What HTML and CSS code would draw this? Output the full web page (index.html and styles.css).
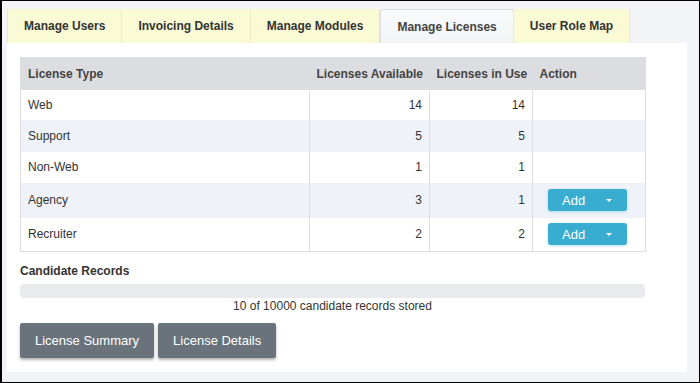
FILE: index.html
```html
<!DOCTYPE html>
<html>
<head>
<meta charset="utf-8">
<link rel="stylesheet" href="styles.css">
</head>
<body>
<div class="frame">
  <div class="tabs">
    <div class="tab">Manage Users</div>
    <div class="tab">Invoicing Details</div>
    <div class="tab">Manage Modules</div>
    <div class="tab active">Manage Licenses</div>
    <div class="tab">User Role Map</div>
  </div>
  <div class="panel">
    <table class="lic">
      <colgroup>
        <col class="c1"><col class="c2"><col class="c3"><col class="c4">
      </colgroup>
      <thead>
        <tr><th>License Type</th><th>Licenses Available</th><th>Licenses in Use</th><th>Action</th></tr>
      </thead>
      <tbody>
        <tr class="r1"><td>Web</td><td class="num">14</td><td class="num">14</td><td></td></tr>
        <tr class="r2 alt"><td>Support</td><td class="num">5</td><td class="num">5</td><td></td></tr>
        <tr class="r3"><td>Non-Web</td><td class="num">1</td><td class="num">1</td><td></td></tr>
        <tr class="r4 alt"><td>Agency</td><td class="num">3</td><td class="num">1</td><td class="act"><span class="add">Add<span class="caret"></span></span></td></tr>
        <tr class="r5"><td>Recruiter</td><td class="num">2</td><td class="num">2</td><td class="act"><span class="add">Add<span class="caret"></span></span></td></tr>
      </tbody>
    </table>
    <div class="rec-label">Candidate Records</div>
    <div class="bar"></div>
    <div class="bar-text">10 of 10000 candidate records stored</div>
    <div class="btns">
      <button class="gbtn">License Summary</button>
      <button class="gbtn">License Details</button>
    </div>
  </div>
</div>
</body>
</html>
```
FILE: styles.css
```css
html, body {
  margin: 0;
  padding: 0;
}
body {
  font-family: "Liberation Sans", Arial, sans-serif;
  color: #333;
  font-size: 12px;
}
.frame {
  width: 700px;
  height: 383px;
  box-sizing: border-box;
  border: 1px solid #000;
  border-left-width: 2px;
  background: #f3f4f8;
  padding: 8px 0 0 5px;
}
.tabs {
  display: flex;
  height: 34px;
}
.tab {
  box-sizing: border-box;
  height: 34px;
  padding: 0 16px;
  display: flex;
  align-items: center;
  background: #fafad4;
  border-left: 1px solid #ecebbe;
  border-right: 1px solid #ecebbe;
  font-weight: bold;
  font-size: 12px;
  color: #333;
  margin-right: -1px;
  white-space: nowrap;
}
.tab.active {
  background: linear-gradient(#fafbfc, #f3f4f6);
  border: 1px solid #dcdde0;
  border-bottom: none;
  border-radius: 3px 3px 0 0;
  margin-left: 1px;
  color: #444;
}
.panel {
  width: 680px;
  height: 329px;
  box-sizing: border-box;
  background: #fff;
  padding: 14px 0 0 13px;
  border-radius: 0 0 3px 3px;
}
.lic {
  width: 625px;
  border-collapse: collapse;
  table-layout: fixed;
  border: 1px solid #dedede;
}
.c1 { width: 289px; }
.c2 { width: 120px; }
.c3 { width: 103px; }
.c4 { width: 113px; }
.lic th {
  background: #dcdde0;
  height: 32px;
  box-sizing: border-box;
  padding: 0 7px;
  text-align: left;
  font-weight: bold;
  color: #444;
  white-space: nowrap;
}
.lic td {
  padding: 0 7px;
  border-left: 1px solid #dedede;
  border-right: 1px solid #dedede;
  color: #333;
}
.lic .r1 td { height: 30px; }
.lic .r2 td { height: 32px; }
.lic .r3 td { height: 31px; }
.lic .r4 td { height: 35px; }
.lic .r5 td { height: 33px; }
.lic tr.alt td { background: #eff2f8; }
.lic td.num { text-align: right; }
.lic td.act { padding-left: 15px; }
.add {
  display: flex;
  align-items: center;
  width: 79px;
  height: 22px;
  box-sizing: border-box;
  background: #38add0;
  color: #fff;
  border-radius: 3px;
  font-size: 13px;
  padding-left: 14px;
  box-shadow: 0 1px 3px rgba(56, 173, 208, 0.35);
  position: relative;
}
.caret {
  position: absolute;
  right: 15px;
  top: 10px;
  width: 0;
  height: 0;
  border-left: 3px solid transparent;
  border-right: 3px solid transparent;
  border-top: 3px solid #fff;
}
.rec-label {
  margin-top: 12px;
  font-weight: bold;
  color: #333;
  line-height: 15px;
}
.bar {
  margin-top: 5px;
  width: 625px;
  height: 14px;
  background: #e8eaed;
  border-radius: 4px;
}
.bar-text {
  width: 625px;
  text-align: center;
  font-size: 12px;
  line-height: 15px;
  margin-top: 1px;
  color: #333;
}
.btns {
  display: flex;
  gap: 4px;
  margin-top: 9px;
}
.gbtn {
  height: 35px;
  padding: 0 15px;
  background: #6a737b;
  color: #fff;
  border: none;
  border-radius: 2px;
  font-family: "Liberation Sans", Arial, sans-serif;
  font-size: 13px;
  box-shadow: 0 2px 3px rgba(0, 0, 0, 0.3);
}
```
